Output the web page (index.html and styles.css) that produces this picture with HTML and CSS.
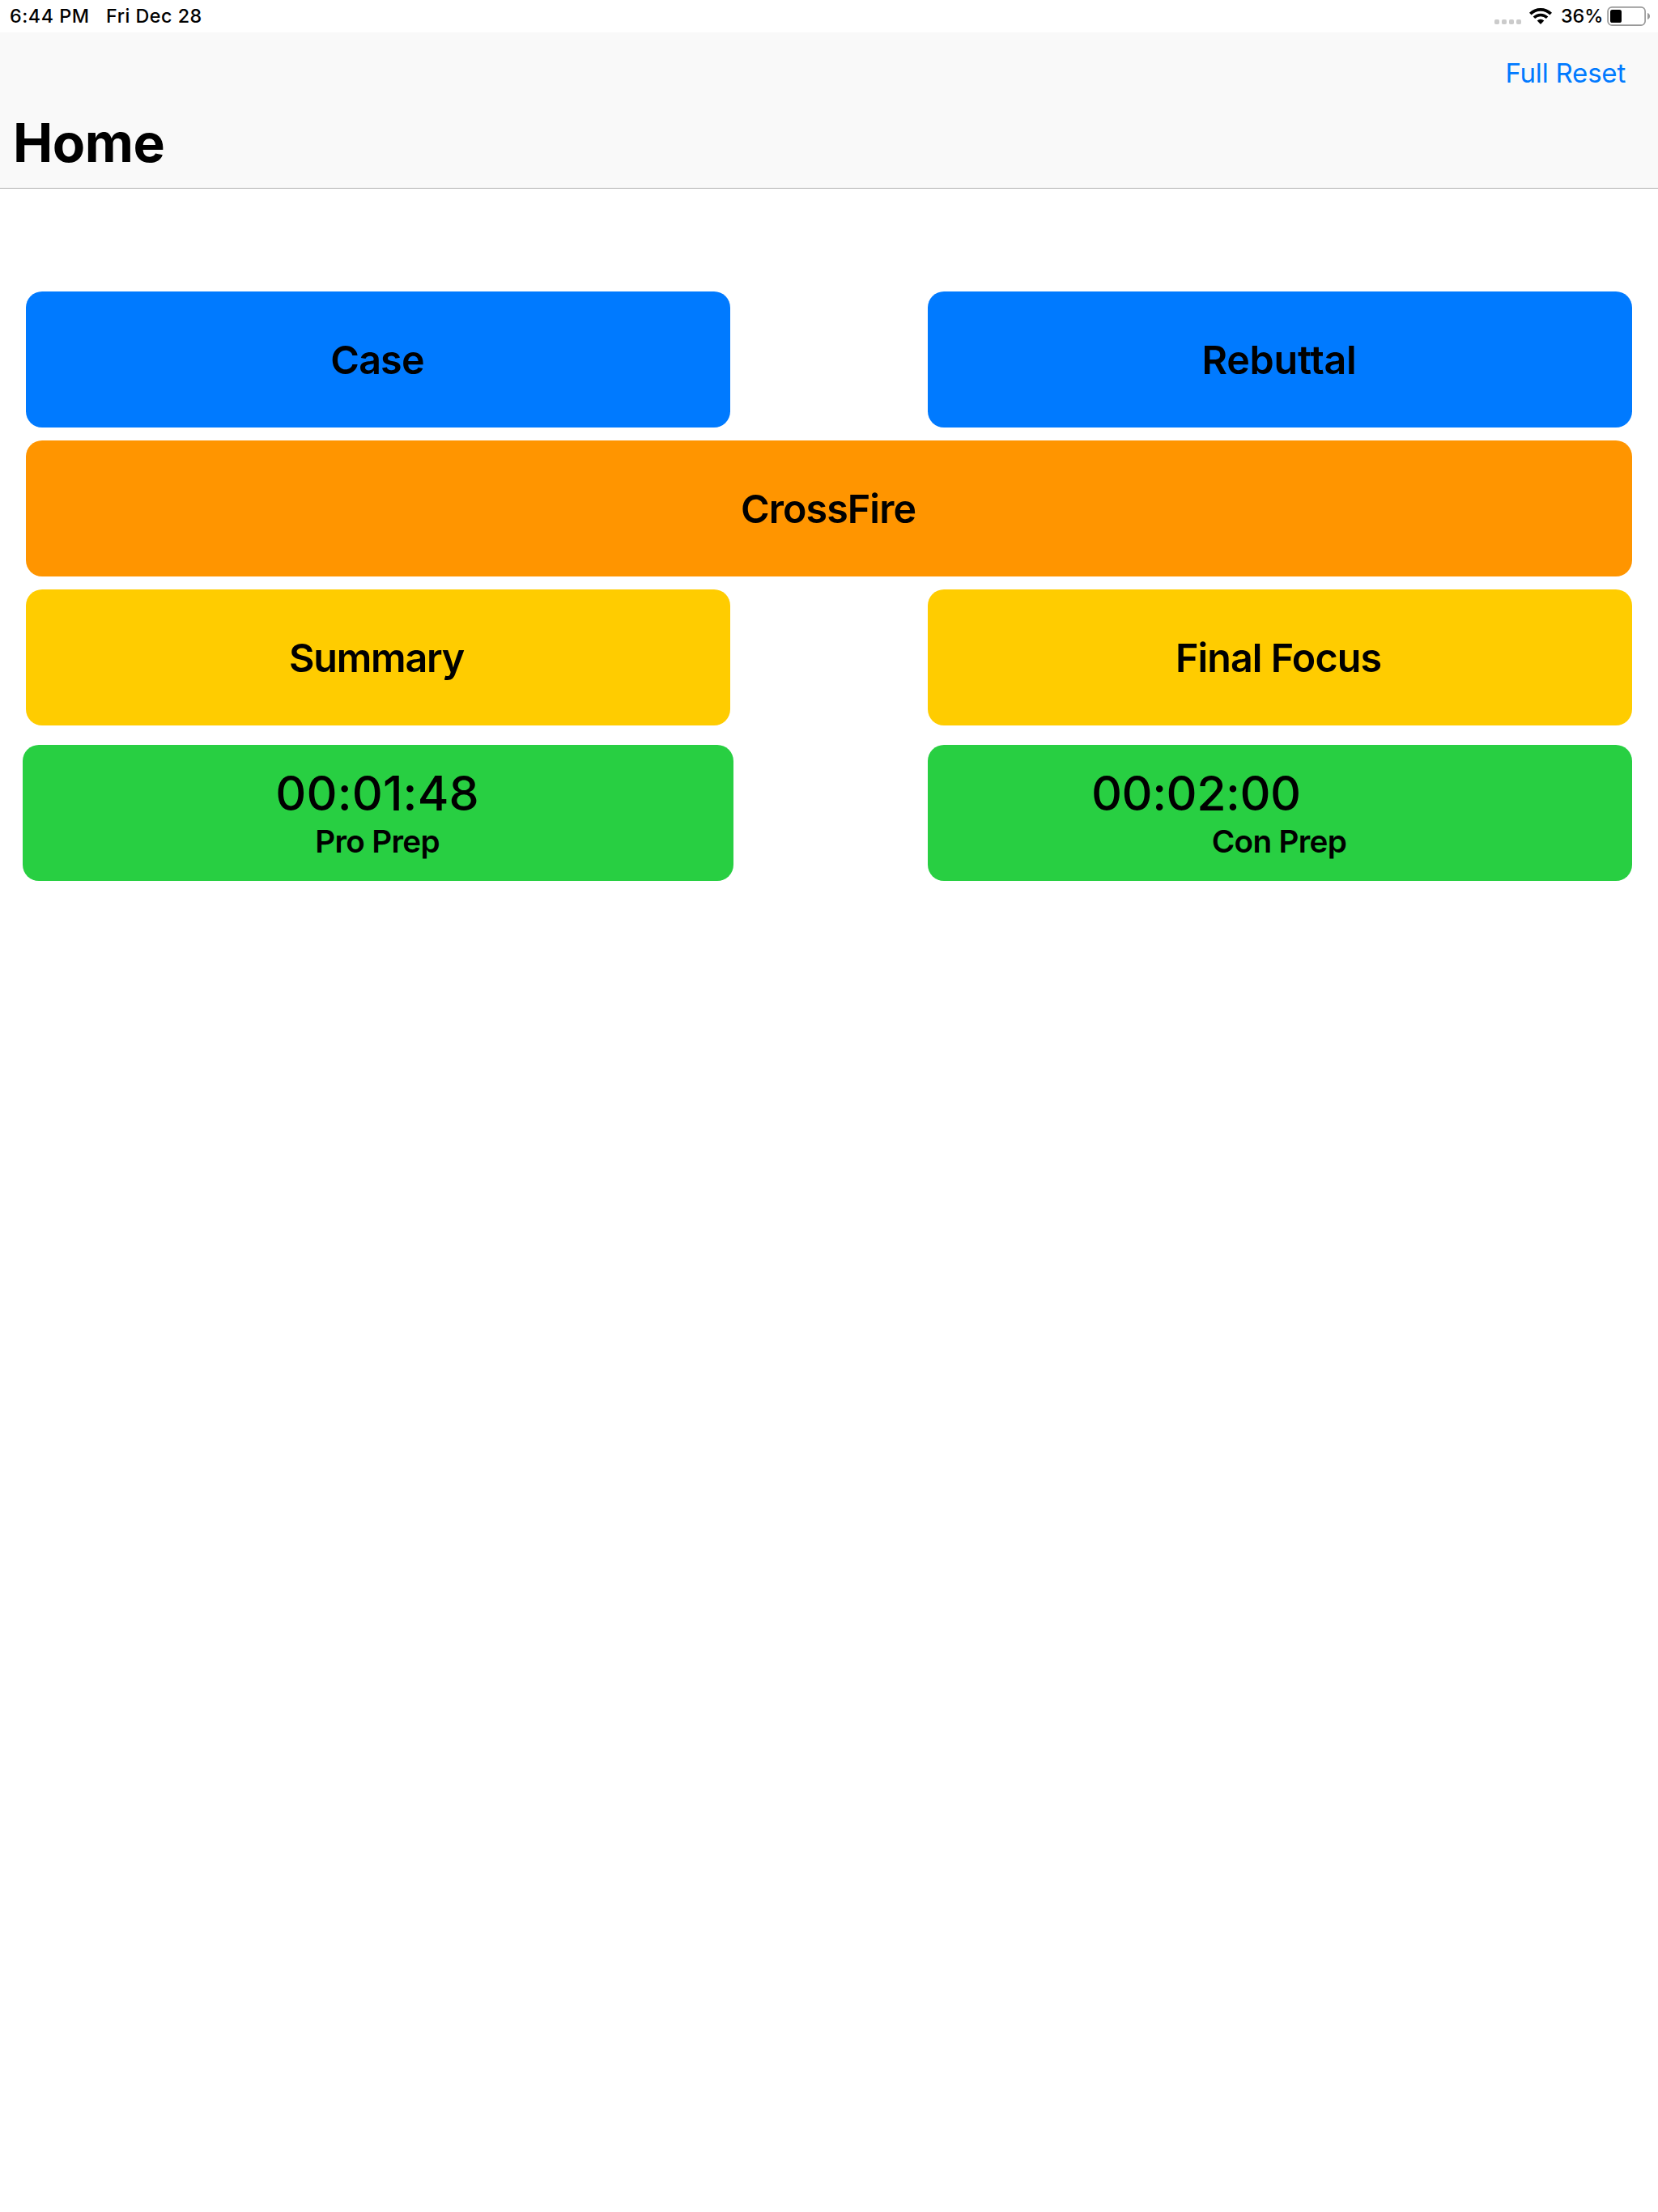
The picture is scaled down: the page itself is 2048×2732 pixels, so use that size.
FILE: index.html
```html
<!DOCTYPE html>
<html lang="en">
<head>
<meta charset="utf-8">
<title>Home</title>
<link rel="stylesheet" href="styles.css">
</head>
<body>
<div class="status">
  <span class="time">6:44 PM</span>
  <span class="date">Fri Dec 28</span>
  <div class="indicators">
    <svg class="signal" width="33" height="40" viewBox="0 0 33 40" fill="#cbcbcb">
      <rect x="0" y="24" width="6" height="6" rx="1.8"/>
      <rect x="9" y="24" width="6" height="6" rx="1.8"/>
      <rect x="18" y="24" width="6" height="6" rx="1.8"/>
      <rect x="27" y="24" width="6" height="6" rx="1.8"/>
    </svg>
    <svg class="wifi" width="28" height="40" viewBox="0 0 28 40">
      <path d="M1.3 17.1A18 18 0 0 1 26.7 17.1" fill="none" stroke="#000" stroke-width="3.8"/>
      <path d="M5.9 21.8A11.5 11.5 0 0 1 22.1 21.8" fill="none" stroke="#000" stroke-width="3.5"/>
      <path d="M14 30L9.7 25.6A6.2 6.2 0 0 1 18.3 25.6Z"/>
    </svg>
    <span class="percent">36%</span>
    <svg class="battery" width="54" height="40" viewBox="0 0 54 40">
      <rect x="1.1" y="8.8" width="46" height="22.4" rx="5" fill="none" stroke="#999" stroke-width="1.7"/>
      <rect x="4" y="12" width="14" height="16" rx="2.6"/>
      <path d="M50 16C51.8 16.6 53 18 53 20S51.800 23.400 50 24Z" fill="#999"/>
    </svg>
  </div>
</div>
<header class="nav">
  <div class="nav-actions"><a class="reset">Full Reset</a></div>
  <h1 class="title">Home</h1>
</header>
<main class="board">
  <div class="row">
    <div class="button blue case">Case</div>
    <div class="button blue rebuttal">Rebuttal</div>
  </div>
  <div class="row">
    <div class="button orange crossfire">CrossFire</div>
  </div>
  <div class="row">
    <div class="button yellow summary">Summary</div>
    <div class="button yellow focus">Final Focus</div>
  </div>
  <div class="row timers">
    <div class="button green timer pro">
      <span class="clock">00:01:48</span>
      <span class="label">Pro Prep</span>
    </div>
    <div class="button green timer con">
      <span class="clock">00:02:00</span>
      <span class="label">Con Prep</span>
    </div>
  </div>
</main>
</body>
</html>
```
FILE: styles.css
```css
* { box-sizing: border-box; }
body {
  margin: 0;
  min-height: 2732px;
  background: #fff;
  color: #000;
  font-family: Inter, "Liberation Sans", sans-serif;
}
svg { display: block; flex: none; }

.status {
  display: flex;
  height: 40px;
  padding: 0 9px 0 12px;
  font-size: 23.3px;
  font-weight: 500;
  line-height: 39px;
  white-space: nowrap;
}
.time { width: 119px; letter-spacing: 0.55px; }
.date { letter-spacing: 0.5px; }
.indicators { display: flex; margin-left: auto; }
.wifi { margin-left: 10px; }
.percent { width: 57px; margin-left: 11px; }

.nav {
  height: 193px;
  background: #f9f9f9;
  border-bottom: 1px solid #b2b2b2;
}
.nav-actions {
  display: flex;
  justify-content: flex-end;
  height: 100px;
  padding-right: 40px;
  line-height: 101px;
}
.reset { color: #007aff; font-size: 33px; letter-spacing: -0.2px; }
.title {
  margin: 0;
  padding-left: 16px;
  font-size: 66px;
  font-weight: 700;
  line-height: 72px;
  letter-spacing: -0.5px;
}

.board {
  display: flex;
  flex-direction: column;
  gap: 16px;
  padding: 127px 32px 0;
}
.row {
  display: grid;
  grid-template-columns: 870px 870px;
  justify-content: space-between;
}
.button {
  display: flex;
  align-items: center;
  justify-content: center;
  height: 168px;
  padding-right: 2px;
  border-radius: 20px;
  font-size: 48.4px;
  font-weight: 600;
}
.blue { background: #007aff; }
.orange { background: #ff9500; }
.yellow { background: #ffcc00; }
.green { background: #28cf42; }
.case { letter-spacing: -0.8px; }
.rebuttal { letter-spacing: -0.2px; }
.crossfire { grid-column: 1 / -1; letter-spacing: -0.9px; }
.summary { padding-right: 4px; letter-spacing: -1.2px; }
.focus { padding-right: 4px; letter-spacing: -0.9px; }

.timers { margin-top: 8px; }
.timer {
  flex-direction: column;
  justify-content: flex-start;
  padding-top: 24px;
}
.pro { margin: 0 -4px; }
.clock { font-size: 59px; font-weight: 500; line-height: 72px; }
.pro .clock { letter-spacing: 0.15px; }
.con .clock { align-self: flex-start; margin-left: 202px; letter-spacing: -0.5px; }
.label { font-size: 38.7px; line-height: 46px; letter-spacing: -0.7px; }
```
